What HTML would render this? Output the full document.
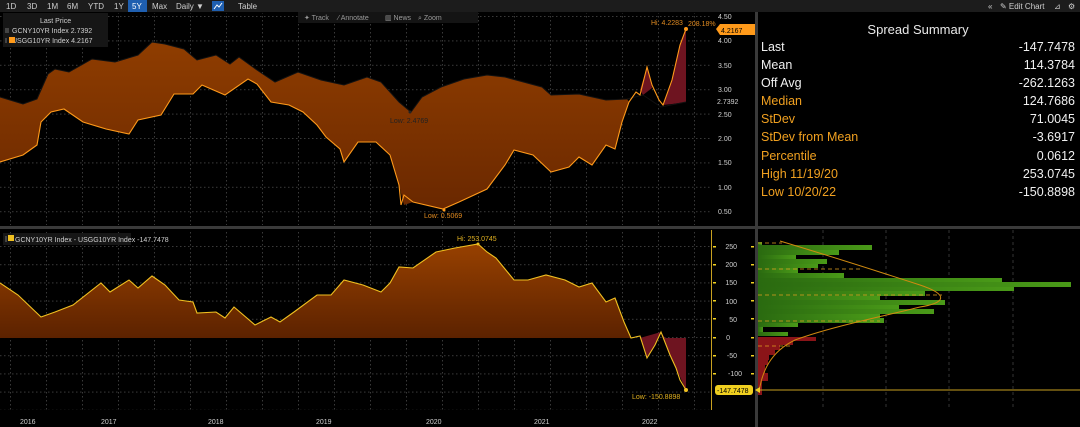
<!DOCTYPE html>
<html><head><meta charset="utf-8"><style>
html,body{margin:0;padding:0;background:#000;width:1080px;height:427px;overflow:hidden;font-family:"Liberation Sans",sans-serif}
svg{display:block}
</style></head><body>
<svg width="1080" height="427" viewBox="0 0 1080 427" xmlns="http://www.w3.org/2000/svg" font-family="Liberation Sans, sans-serif">
<defs>
<linearGradient id="og" x1="0" y1="0" x2="0" y2="1"><stop offset="0" stop-color="#8f3d00"/><stop offset="1" stop-color="#6a2800"/></linearGradient>
<linearGradient id="og2" x1="0" y1="240" x2="0" y2="338" gradientUnits="userSpaceOnUse"><stop offset="0" stop-color="#9a4200"/><stop offset="1" stop-color="#5c2200"/></linearGradient>
<linearGradient id="gg" x1="0" y1="0" x2="1" y2="0"><stop offset="0" stop-color="#2a6a10"/><stop offset="1" stop-color="#4a9a18"/></linearGradient>
<pattern id="vg" width="36" height="4" patternUnits="userSpaceOnUse" x="10"><rect x="0" y="0" width="1" height="1.5" fill="#3a3a3a"/></pattern>
<pattern id="hg" width="4" height="24.4" patternUnits="userSpaceOnUse" y="16"><rect x="0" y="0" width="1.5" height="1" fill="#3a3a3a"/></pattern>
<pattern id="hg2" width="4" height="18.2" patternUnits="userSpaceOnUse" y="246"><rect x="0" y="0" width="1.5" height="1" fill="#3a3a3a"/></pattern>
</defs>
<rect width="1080" height="427" fill="#000"/>
<!-- toolbar -->
<rect x="0" y="0" width="1080" height="12" fill="#1c1c1c"/>
<g font-size="8" fill="#cfcfcf">
<text x="6" y="9">1D</text><text x="27" y="9">3D</text><text x="47" y="9">1M</text><text x="67" y="9">6M</text><text x="88" y="9">YTD</text><text x="114" y="9">1Y</text>
<rect x="128" y="0" width="19" height="12" fill="#1f5fb0"/><text x="132" y="9" fill="#fff">5Y</text>
<text x="152" y="9">Max</text><text x="176" y="9">Daily ▼</text>
<rect x="212" y="1" width="12" height="10" fill="#1f5fb0"/><path d="M214 9 L217 5 L219 7 L222 3" stroke="#fff" fill="none" stroke-width="1"/>
<text x="238" y="9">Table</text>
<text x="988" y="9">«</text><text x="1000" y="9">✎ Edit Chart</text><text x="1054" y="9">⊿</text><text x="1068" y="9">⚙</text>
</g>
<!-- top chart grid -->
<rect x="0" y="13" width="710" height="212" fill="url(#vg)"/>
<rect x="0" y="13" width="710" height="212" fill="url(#hg)"/>
<!-- top fill -->
<polygon fill="url(#og)" points="0,97 23,104 37,99 48,74 55,69 69,72 92,59 115,62 138,55 152,42 165,44 184,49 197,60 216,55 230,64 239,57 257,70 275,82 298,72 321,80 344,85 367,77 381,82 399,102 411,112 422,97 441,87 464,79 487,75 505,77 542,87 551,95 579,94 606,100 627,99 629,102 622,122 615,149 606,145 592,165 579,157 569,167 551,172 533,155 514,150 505,165 487,189 459,202 443,209 413,202 404,205 399,185 390,155 376,142 358,142 344,162 340,149 326,137 317,125 303,112 289,105 271,102 257,84 248,79 225,95 202,85 193,94 174,94 161,115 138,120 129,134 106,129 83,122 64,109 51,112 41,122 37,145 23,155 0,162"/>
<polygon fill="#6e1420" points="640,90 647,67 652,88 643,95"/>
<polygon fill="#6e1420" points="663,105 672,80 680,45 686,29 686,102 672,104"/>
<polyline fill="none" stroke="#111" stroke-width="1" points="0,97 23,104 37,99 48,74 55,69 69,72 92,59 115,62 138,55 152,42 165,44 184,49 197,60 216,55 230,64 239,57 257,70 275,82 298,72 321,80 344,85 367,77 381,82 399,102 411,112 422,97 441,87 464,79 487,75 505,77 542,87 551,95 579,94 606,100 627,99 643,95 661,107 686,102"/>
<polyline fill="none" stroke="#ff9a1a" stroke-width="1.1" points="0,162 23,155 37,145 41,122 51,112 64,109 83,122 106,129 129,134 138,120 161,115 174,94 193,94 202,85 225,95 248,79 257,84 271,102 289,105 303,112 317,125 326,137 340,149 344,162 358,142 376,142 390,155 399,185 401,205 404,195 413,202 443,209 459,202 487,189 505,165 514,150 533,155 551,172 569,167 579,157 592,165 606,145 615,149 622,122 629,102 636,92 640,95 647,67 652,85 659,100 663,105 672,80 680,45 686,29"/>
<circle cx="686" cy="29" r="2" fill="#ff9a1a"/>
<circle cx="410" cy="112" r="1.5" fill="#222"/>
<circle cx="444" cy="210" r="1.5" fill="#ff9a1a"/>
<g font-size="7" fill="#e08a20"><text x="390" y="123" fill="#222">Low: 2.4769</text><text x="424" y="218">Low: 0.5069</text><text x="651" y="25">Hi: 4.2283</text><text x="688" y="26">208.18%</text></g>
<!-- top legend -->
<rect x="3" y="13" width="105" height="34" fill="#161616"/>
<g font-size="7" fill="#cfcfcf"><text x="40" y="23">Last Price</text><text x="12" y="33">GCNY10YR Index 2.7392</text><text x="12" y="43">USGG10YR Index 4.2167</text></g>
<rect x="5" y="28" width="4" height="5" fill="#444"/><rect x="5" y="38" width="2" height="5" fill="#444"/><rect x="9" y="37" width="6" height="6" fill="#ff9a1a"/>
<rect x="298" y="12" width="180" height="11" fill="#141414"/>
<g font-size="7" fill="#9a9a9a"><text x="304" y="20">✦ Track</text><text x="338" y="20">⁄ Annotate</text><text x="385" y="20">▥ News</text><text x="418" y="20">⌕ Zoom</text></g>
<!-- top axis -->
<g font-size="7" fill="#d0d0d0"><text x="718" y="19">4.50</text><text x="718" y="43">4.00</text><text x="718" y="68">3.50</text><text x="718" y="92">3.00</text><text x="718" y="117">2.50</text><text x="718" y="141">2.00</text><text x="718" y="165">1.50</text><text x="718" y="190">1.00</text><text x="718" y="214">0.50</text><text x="717" y="104">2.7392</text></g>
<polygon points="716,29 720,24 755,24 755,35 720,35" fill="#ff9a1a"/><text x="721" y="33" font-size="7" fill="#000">4.2167</text>
<!-- separators -->
<rect x="755" y="12" width="3" height="415" fill="#3a3a3a"/>
<rect x="0" y="226" width="1080" height="3" fill="#3a3a3a"/>
<!-- summary -->
<text x="918" y="34" font-size="13" fill="#e8e8e8" text-anchor="middle">Spread Summary</text>
<g font-size="12.5">
<g fill="#f0f0f0"><text x="761" y="51">Last</text><text x="761" y="69">Mean</text><text x="761" y="87">Off Avg</text></g>
<g fill="#f0a020"><text x="761" y="105">Median</text><text x="761" y="123">StDev</text><text x="761" y="141">StDev from Mean</text><text x="761" y="160">Percentile</text><text x="761" y="178">High 11/19/20</text><text x="761" y="196">Low 10/20/22</text></g>
<g fill="#f0f0f0" text-anchor="end"><text x="1075" y="51">-147.7478</text><text x="1075" y="69">114.3784</text><text x="1075" y="87">-262.1263</text><text x="1075" y="105">124.7686</text><text x="1075" y="123">71.0045</text><text x="1075" y="141">-3.6917</text><text x="1075" y="160">0.0612</text><text x="1075" y="178">253.0745</text><text x="1075" y="196">-150.8898</text></g>
</g>
<!-- bottom chart grid -->
<rect x="0" y="230" width="710" height="180" fill="url(#vg)"/>
<rect x="0" y="230" width="710" height="180" fill="url(#hg2)"/>
<polygon fill="url(#og2)" points="0,283 18,295 41,317 55,312 73,305 101,283 110,292 129,280 138,288 152,276 165,285 179,300 193,302 197,313 216,312 225,318 234,307 255,325 271,317 280,322 294,312 317,295 331,295 344,280 363,285 381,292 390,283 399,267 413,268 436,252 455,248 478,244 487,252 496,258 514,280 528,280 546,275 565,280 579,287 592,283 606,302 615,298 624,322 631,338 0,338"/>
<polygon fill="#6e1420" points="640,338 647,358 655,345 661,332 665,338 686,338 686,390 676,368 670,355 661,332"/>
<polyline fill="none" stroke="#f0c020" stroke-width="1.1" points="0,283 18,295 41,317 55,312 73,305 101,283 110,292 129,280 138,288 152,276 165,285 179,300 193,302 197,313 216,312 225,318 234,307 255,325 271,317 280,322 294,312 317,295 331,295 344,280 363,285 381,292 390,283 399,267 413,268 436,252 455,248 478,244 487,252 496,258 514,280 528,280 546,275 565,280 579,287 592,283 606,302 615,298 624,322 631,338 640,336 647,358 655,345 661,332 670,355 676,368 680,380 686,390"/>
<circle cx="686" cy="390" r="2" fill="#f0c020"/><circle cx="478" cy="244" r="1.5" fill="#f0c020"/>
<g font-size="7" fill="#e0b020"><text x="457" y="241">Hi: 253.0745</text><text x="632" y="399">Low: -150.8898</text></g>
<rect x="3" y="233" width="128" height="12" fill="#161616"/>
<rect x="5" y="236" width="2" height="6" fill="#444"/><rect x="8" y="235" width="6" height="6" fill="#f0c020"/>
<text x="15" y="242" font-size="7" fill="#cfcfcf">GCNY10YR Index - USGG10YR Index -147.7478</text>
<!-- bottom axis -->
<rect x="711" y="230" width="1" height="180" fill="#c8a020"/>
<g font-size="7" fill="#d0d0d0" text-anchor="end"><text x="737" y="249">250</text><text x="737" y="267">200</text><text x="737" y="285">150</text><text x="737" y="304">100</text><text x="737" y="322">50</text><text x="730" y="340">0</text><text x="737" y="358">-50</text><text x="742" y="376">-100</text></g>
<g fill="#f0d020"><rect x="713" y="246" width="3" height="1.5"/><rect x="713" y="264" width="3" height="1.5"/><rect x="713" y="282" width="3" height="1.5"/><rect x="713" y="300" width="3" height="1.5"/><rect x="713" y="318" width="3" height="1.5"/><rect x="713" y="337" width="3" height="1.5"/><rect x="713" y="355" width="3" height="1.5"/><rect x="713" y="373" width="3" height="1.5"/>
<rect x="751" y="246" width="3" height="1.5"/><rect x="751" y="264" width="3" height="1.5"/><rect x="751" y="282" width="3" height="1.5"/><rect x="751" y="300" width="3" height="1.5"/><rect x="751" y="318" width="3" height="1.5"/><rect x="751" y="337" width="3" height="1.5"/><rect x="751" y="355" width="3" height="1.5"/><rect x="751" y="373" width="3" height="1.5"/></g>
<rect x="715" y="385" width="38" height="10" rx="3" fill="#f0d020"/><text x="717" y="393" font-size="7" fill="#000">-147.7478</text>
<g font-size="7" fill="#d0d0d0"><text x="20" y="424">2016</text><text x="101" y="424">2017</text><text x="208" y="424">2018</text><text x="316" y="424">2019</text><text x="426" y="424">2020</text><text x="534" y="424">2021</text><text x="642" y="424">2022</text></g>
<!-- histogram -->
<g stroke="#333" stroke-dasharray="3,3"><line x1="823" y1="230" x2="823" y2="410"/><line x1="886" y1="230" x2="886" y2="410"/><line x1="949" y1="230" x2="949" y2="410"/><line x1="1013" y1="230" x2="1013" y2="410"/></g>
<g fill="url(#gg)">
<rect x="758" y="242" width="4" height="3"/><rect x="758" y="245" width="114" height="5"/><rect x="758" y="250" width="81" height="5"/><rect x="758" y="255" width="38" height="4"/><rect x="758" y="259" width="69" height="5"/><rect x="758" y="264" width="60" height="4"/><rect x="758" y="268" width="40" height="5"/><rect x="758" y="273" width="86" height="5"/><rect x="758" y="278" width="244" height="4"/><rect x="758" y="282" width="313" height="5"/><rect x="758" y="287" width="256" height="4"/><rect x="758" y="291" width="167" height="5"/><rect x="758" y="296" width="122" height="4"/><rect x="758" y="300" width="187" height="5"/><rect x="758" y="305" width="141" height="4"/><rect x="758" y="309" width="176" height="5"/><rect x="758" y="314" width="122" height="4"/><rect x="758" y="318" width="126" height="5"/><rect x="758" y="323" width="40" height="4"/><rect x="758" y="327" width="5" height="5"/><rect x="758" y="332" width="30" height="4"/>
</g>
<g fill="#8a1418"><rect x="758" y="337" width="58" height="4"/><rect x="758" y="341" width="35" height="4"/><rect x="758" y="345" width="22" height="5"/><rect x="758" y="350" width="17" height="5"/><rect x="758" y="355" width="11" height="5"/><rect x="758" y="360" width="10" height="5"/><rect x="758" y="365" width="7" height="8"/><rect x="758" y="373" width="10" height="8"/><rect x="758" y="381" width="4" height="14"/></g>
<g stroke="#e0a020" stroke-dasharray="4,3" stroke-width="0.8"><line x1="758" y1="243" x2="782" y2="243"/><line x1="758" y1="269" x2="860" y2="269"/><line x1="758" y1="295" x2="942" y2="295"/><line x1="758" y1="321" x2="880" y2="321"/><line x1="758" y1="346" x2="790" y2="346"/></g>
<path d="M780,241 C830,256 880,272 920,285 C950,295 945,303 920,307 C880,317 830,327 795,340 C770,352 762,372 759,392" fill="none" stroke="#d08a10" stroke-width="1"/>
<rect x="758" y="389.5" width="322" height="1" fill="#c8a020"/>
<polygon points="755,390 760,387 760,393" fill="#f0d020"/>
</svg>
</body></html>
